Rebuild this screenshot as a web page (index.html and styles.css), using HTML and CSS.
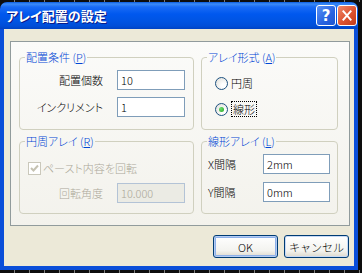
FILE: index.html
```html
<!DOCTYPE html>
<html lang="ja">
<head>
  <meta charset="UTF-8" />
  <title>アレイ配置の設定</title>
  <link rel="stylesheet" href="styles.css">
</head>
<body>

<div class="window">
  <div class="titlebar">
    <span class="title">アレイ配置の設定</span>
    <span class="cap-btn help">?</span>
    <span class="cap-btn close">
      <svg width="20" height="21" viewBox="0 0 20 21"><path d="M6 6 L14 15 M14 6 L6 15" stroke="#fff" stroke-width="2.2" stroke-linecap="square"/></svg>
    </span>
  </div>

  <div class="frame">
    <div class="panel">

      <fieldset class="group">
        <legend>配置条件 (<u>P</u>)</legend>
        <div class="form-grid">
          <label>配置個数</label>
          <input class="edit" value="10">
          <label>インクリメント</label>
          <input class="edit" value="1">
        </div>
      </fieldset>

      <fieldset class="group">
        <legend>アレイ形式 (<u>A</u>)</legend>
        <div class="radios">
          <div class="radio-row"><span class="radio"></span><span>円周</span></div>
          <div class="radio-row"><span class="radio checked"></span><span class="focus">線形</span></div>
        </div>
      </fieldset>

      <fieldset class="group">
        <legend>円周アレイ (<u>R</u>)</legend>
        <div class="check-row disabled">
          <span class="checkbox">
            <svg width="11" height="11" viewBox="0 0 11 11"><path d="M2 5 L4.5 7.5 L9 2.5" fill="none" stroke="#C5C2B2" stroke-width="2"/></svg>
          </span>
          <span>ペースト内容を回転</span>
        </div>
        <div class="form-grid">
          <label class="disabled">回転角度</label>
          <input class="edit" value="10.000" disabled>
        </div>
      </fieldset>

      <fieldset class="group">
        <legend>線形アレイ (<u>L</u>)</legend>
        <div class="form-grid linear">
          <label>X間隔</label>
          <input class="edit" value="2mm">
          <label>Y間隔</label>
          <input class="edit" value="0mm">
        </div>
      </fieldset>

    </div>

    <div class="actions">
      <button class="btn default">OK</button>
      <button class="btn">キャンセル</button>
    </div>
  </div>
</div>

</body>
</html>
```

FILE: styles.css
```css
* { box-sizing: border-box; }
body {
  margin: 0;
  height: 273px;
  overflow: hidden;
  background:
    linear-gradient(90deg, transparent 14px, #7a7a7a 14px) 0 0 / 15px 2px repeat-x,
    linear-gradient(90deg, transparent 14px, #7a7a7a 14px) 0 100% / 15px 3px repeat-x,
    #0d0d0d;
  font-family: "Noto Sans CJK JP", sans-serif;
  font-size: 11px;
  font-weight: 300;
  color: #000;
  font-feature-settings: "palt";
}
.window {
  width: 358px;
  margin-top: 2px;
}
.titlebar {
  height: 27px;
  display: flex;
  align-items: center;
  gap: 1px;
  padding: 0 1px 0 6px;
  border-radius: 7px 7px 0 0;
  background: linear-gradient(to bottom, #0A5BE0 0, #3D8CF7 2px, #1A6BF5 5px, #0058EE 12px, #0054E3 19px, #004ED8 24px, #0043C3 27px);
}
.title {
  flex: 1;
  color: #fff;
  font-size: 13px;
  font-weight: bold;
  line-height: 16px;
  text-shadow: 1px 1px 0 #0A1C8A;
}
.cap-btn {
  width: 20px;
  height: 21px;
  border: 1px solid #fff;
  border-radius: 3px;
  display: flex;
  align-items: center;
  justify-content: center;
}
.cap-btn.help {
  background: linear-gradient(135deg, #5A92F5, #2863E0 60%, #1E55CF);
  color: #fff;
  font-family: "DejaVu Sans", sans-serif;
  font-weight: bold;
  font-size: 15px;
}
.cap-btn.close {
  background: linear-gradient(135deg, #EE8A6C, #DD5330 55%, #C23C1A);
}
.frame {
  background: #ECE9D8;
  border: 4px solid #0A4ED9;
  border-top: 0;
  padding: 12px 0 8px 6px;
}
.panel {
  width: 340px;
  border: 1px solid #919B9C;
  background: linear-gradient(#FBFBF9, #F3F2EC);
  display: grid;
  grid-template-columns: 175px 137px;
  grid-template-rows: 80px 80px;
  column-gap: 7px;
  row-gap: 4px;
  padding: 8px 11px 11px 8px;
}
.group {
  margin: 0;
  padding: 6px 0 0 0;
  min-width: 0;
  border: 1px solid #D0D0BF;
  border-radius: 4px;
}
.group legend {
  margin-left: 5px;
  padding: 0 1px;
  color: #0046D5;
  font-size: 11px;
  line-height: 14px;
}
.form-grid {
  display: grid;
  grid-template-columns: 83px 68px;
  column-gap: 14px;
  row-gap: 7px;
}
.form-grid label {
  text-align: right;
  line-height: 20px;
}
.form-grid.linear {
  grid-template-columns: 55px 67px;
  column-gap: 0;
  row-gap: 8px;
  padding-left: 6px;
}
.form-grid.linear label {
  text-align: left;
}
.edit {
  height: 20px;
  width: 100%;
  margin: 0;
  border: 1px solid #7F9DB9;
  background: #fff;
  padding: 0 3px;
  font-family: "Noto Sans CJK JP", sans-serif;
  font-size: 11px;
  font-weight: 300;
  color: #000;
}
.edit:disabled {
  background: #EBEBE4;
  border-color: #B3C3D6;
  color: #ACA899;
}
.disabled {
  color: #ACA899;
}
.radios {
  display: flex;
  flex-direction: column;
  gap: 6px;
  padding: 3px 0 0 13px;
}
.radio-row {
  display: flex;
  align-items: center;
  gap: 3px;
  height: 20px;
}
.radio {
  width: 13px;
  height: 13px;
  border: 1px solid #1C5180;
  border-radius: 50%;
  background: radial-gradient(circle at 70% 70%, #fff 20%, #DCDCD5);
  display: flex;
  align-items: center;
  justify-content: center;
}
.radio.checked::after {
  content: '';
  width: 5px;
  height: 5px;
  border-radius: 50%;
  background: radial-gradient(circle at 35% 35%, #6EE06E, #21A121);
}
.focus {
  border: 1px dotted #000;
  padding: 0 1px;
  line-height: 14px;
}
.check-row {
  display: flex;
  align-items: center;
  gap: 2px;
  height: 20px;
  margin: 4px 0 5px 8px;
}
.checkbox {
  width: 13px;
  height: 13px;
  border: 1px solid #CAC8BB;
  background: #fff;
  display: flex;
  align-items: center;
  justify-content: center;
}
.actions {
  display: flex;
  justify-content: flex-end;
  gap: 6px;
  margin-top: 9px;
  padding-right: 5px;
}
.btn {
  width: 65px;
  height: 23px;
  margin: 0;
  border: 1px solid #003C74;
  border-radius: 3px;
  background: linear-gradient(#FFFFFF, #F3F3EF 70%, #DCD8CC);
  font-family: "Noto Sans CJK JP", sans-serif;
  font-size: 11px;
  font-weight: 300;
  color: #000;
  padding: 0;
  box-shadow: inset 0 0 0 1px #C7D9F5;
}
.btn.default {
  box-shadow: inset 0 0 0 1px #B3CCF4, inset 0 0 0 2px #8EB0E8;
}
```
